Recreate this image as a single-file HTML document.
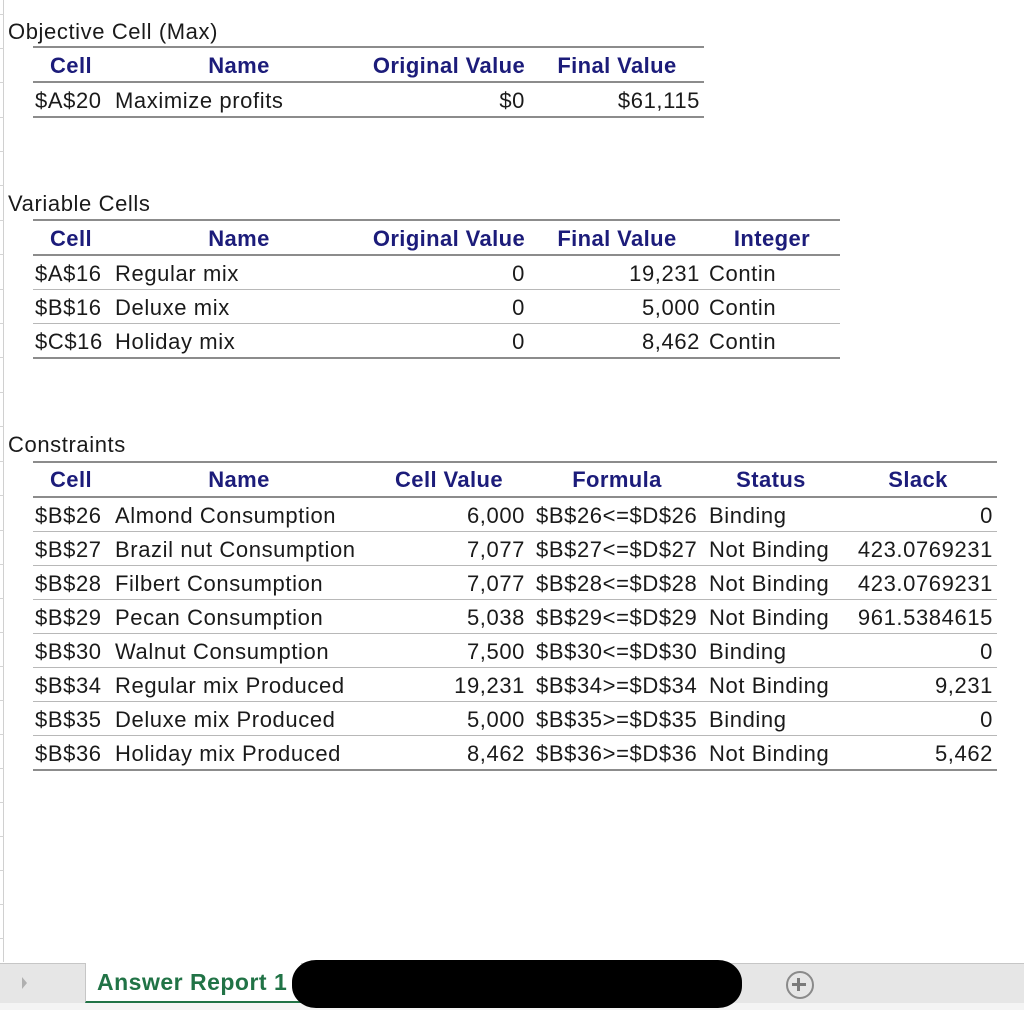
<!DOCTYPE html>
<html><head><meta charset="utf-8"><style>
body{margin:0;width:1024px;height:1010px;position:relative;background:#fff;overflow:hidden;font-family:"Liberation Sans",Arial,sans-serif;font-size:22px;letter-spacing:0.6px;color:#1a1a1a}
.t{position:absolute;line-height:26px;white-space:nowrap}
.r{text-align:right}
.h{color:#1c1c7a;font-weight:bold;transform:translateX(-50%);letter-spacing:0.4px}
.l{position:absolute;height:2px;background:#8c8c8c;left:33px}
.g{position:absolute;left:0;width:4px;height:1px;background:#d4d4d4}
</style></head><body>
<div style="position:absolute;left:3px;top:0;width:1px;height:962px;background:#d0d0d0"></div>
<div class="g" style="top:14px"></div><div class="g" style="top:48px"></div><div class="g" style="top:82px"></div><div class="g" style="top:117px"></div><div class="g" style="top:151px"></div><div class="g" style="top:185px"></div><div class="g" style="top:220px"></div><div class="g" style="top:254px"></div><div class="g" style="top:289px"></div><div class="g" style="top:323px"></div><div class="g" style="top:357px"></div><div class="g" style="top:392px"></div><div class="g" style="top:426px"></div><div class="g" style="top:461px"></div><div class="g" style="top:495px"></div><div class="g" style="top:530px"></div><div class="g" style="top:564px"></div><div class="g" style="top:598px"></div><div class="g" style="top:632px"></div><div class="g" style="top:666px"></div><div class="g" style="top:700px"></div><div class="g" style="top:734px"></div><div class="g" style="top:768px"></div><div class="g" style="top:802px"></div><div class="g" style="top:836px"></div><div class="g" style="top:870px"></div><div class="g" style="top:904px"></div><div class="g" style="top:938px"></div>

<!-- Objective -->
<div class="t" style="left:8px;top:19px">Objective Cell (Max)</div>
<div class="l" style="top:46px;width:671px"></div>
<div class="t h" style="left:71px;top:53px">Cell</div>
<div class="t h" style="left:239px;top:53px">Name</div>
<div class="t h" style="left:449px;top:53px">Original Value</div>
<div class="t h" style="left:617px;top:53px">Final Value</div>
<div class="l" style="top:81px;width:671px"></div>
<div class="t" style="left:35px;top:88px">$A$20</div><div class="t" style="left:115px;top:88px">Maximize profits</div>
<div class="t r" style="right:499px;top:88px">$0</div><div class="t r" style="right:324px;top:88px">$61,115</div>
<div class="l" style="top:116px;width:671px"></div>

<!-- Variable -->
<div class="t" style="left:8px;top:191px">Variable Cells</div>
<div class="l" style="top:219px;width:807px"></div>
<div class="t h" style="left:71px;top:226px">Cell</div>
<div class="t h" style="left:239px;top:226px">Name</div>
<div class="t h" style="left:449px;top:226px">Original Value</div>
<div class="t h" style="left:617px;top:226px">Final Value</div>
<div class="t h" style="left:772px;top:226px">Integer</div>
<div class="l" style="top:254px;width:807px"></div>
<div class="t" style="left:35px;top:261px">$A$16</div><div class="t" style="left:115px;top:261px">Regular mix</div><div class="t r" style="right:499px;top:261px">0</div><div class="t r" style="right:324px;top:261px">19,231</div><div class="t" style="left:709px;top:261px">Contin</div>
<div class="l" style="top:289px;width:807px;background:#b8b8b8;height:1px"></div>
<div class="t" style="left:35px;top:295px">$B$16</div><div class="t" style="left:115px;top:295px">Deluxe mix</div><div class="t r" style="right:499px;top:295px">0</div><div class="t r" style="right:324px;top:295px">5,000</div><div class="t" style="left:709px;top:295px">Contin</div>
<div class="l" style="top:323px;width:807px;background:#b8b8b8;height:1px"></div>
<div class="t" style="left:35px;top:329px">$C$16</div><div class="t" style="left:115px;top:329px">Holiday mix</div><div class="t r" style="right:499px;top:329px">0</div><div class="t r" style="right:324px;top:329px">8,462</div><div class="t" style="left:709px;top:329px">Contin</div>
<div class="l" style="top:357px;width:807px"></div>

<!-- Constraints -->
<div class="t" style="left:8px;top:432px">Constraints</div>
<div class="l" style="top:461px;width:964px"></div>
<div class="t h" style="left:71px;top:467px">Cell</div>
<div class="t h" style="left:239px;top:467px">Name</div>
<div class="t h" style="left:449px;top:467px">Cell Value</div>
<div class="t h" style="left:617px;top:467px">Formula</div>
<div class="t h" style="left:771px;top:467px">Status</div>
<div class="t h" style="left:918px;top:467px">Slack</div>
<div class="l" style="top:496px;width:964px"></div>

<div class="t" style="left:35px;top:503px">$B$26</div><div class="t" style="left:115px;top:503px">Almond Consumption</div><div class="t r" style="right:499px;top:503px">6,000</div><div class="t" style="left:536px;top:503px">$B$26&lt;=$D$26</div><div class="t" style="left:709px;top:503px">Binding</div><div class="t r" style="right:31px;top:503px">0</div>
<div class="l" style="top:531px;width:964px;background:#b8b8b8;height:1px"></div>
<div class="t" style="left:35px;top:537px">$B$27</div><div class="t" style="left:115px;top:537px">Brazil nut Consumption</div><div class="t r" style="right:499px;top:537px">7,077</div><div class="t" style="left:536px;top:537px">$B$27&lt;=$D$27</div><div class="t" style="left:709px;top:537px">Not Binding</div><div class="t r" style="right:31px;top:537px">423.0769231</div>
<div class="l" style="top:565px;width:964px;background:#b8b8b8;height:1px"></div>
<div class="t" style="left:35px;top:571px">$B$28</div><div class="t" style="left:115px;top:571px">Filbert Consumption</div><div class="t r" style="right:499px;top:571px">7,077</div><div class="t" style="left:536px;top:571px">$B$28&lt;=$D$28</div><div class="t" style="left:709px;top:571px">Not Binding</div><div class="t r" style="right:31px;top:571px">423.0769231</div>
<div class="l" style="top:599px;width:964px;background:#b8b8b8;height:1px"></div>
<div class="t" style="left:35px;top:605px">$B$29</div><div class="t" style="left:115px;top:605px">Pecan Consumption</div><div class="t r" style="right:499px;top:605px">5,038</div><div class="t" style="left:536px;top:605px">$B$29&lt;=$D$29</div><div class="t" style="left:709px;top:605px">Not Binding</div><div class="t r" style="right:31px;top:605px">961.5384615</div>
<div class="l" style="top:633px;width:964px;background:#b8b8b8;height:1px"></div>
<div class="t" style="left:35px;top:639px">$B$30</div><div class="t" style="left:115px;top:639px">Walnut Consumption</div><div class="t r" style="right:499px;top:639px">7,500</div><div class="t" style="left:536px;top:639px">$B$30&lt;=$D$30</div><div class="t" style="left:709px;top:639px">Binding</div><div class="t r" style="right:31px;top:639px">0</div>
<div class="l" style="top:667px;width:964px;background:#b8b8b8;height:1px"></div>
<div class="t" style="left:35px;top:673px">$B$34</div><div class="t" style="left:115px;top:673px">Regular mix Produced</div><div class="t r" style="right:499px;top:673px">19,231</div><div class="t" style="left:536px;top:673px">$B$34&gt;=$D$34</div><div class="t" style="left:709px;top:673px">Not Binding</div><div class="t r" style="right:31px;top:673px">9,231</div>
<div class="l" style="top:701px;width:964px;background:#b8b8b8;height:1px"></div>
<div class="t" style="left:35px;top:707px">$B$35</div><div class="t" style="left:115px;top:707px">Deluxe mix Produced</div><div class="t r" style="right:499px;top:707px">5,000</div><div class="t" style="left:536px;top:707px">$B$35&gt;=$D$35</div><div class="t" style="left:709px;top:707px">Binding</div><div class="t r" style="right:31px;top:707px">0</div>
<div class="l" style="top:735px;width:964px;background:#b8b8b8;height:1px"></div>
<div class="t" style="left:35px;top:741px">$B$36</div><div class="t" style="left:115px;top:741px">Holiday mix Produced</div><div class="t r" style="right:499px;top:741px">8,462</div><div class="t" style="left:536px;top:741px">$B$36&gt;=$D$36</div><div class="t" style="left:709px;top:741px">Not Binding</div><div class="t r" style="right:31px;top:741px">5,462</div>
<div class="l" style="top:769px;width:964px"></div>

<!-- Tab bar -->
<div style="position:absolute;left:0;top:963px;width:1024px;height:40px;background:#e6e6e6;border-top:1px solid #c6c6c6"></div>
<div style="position:absolute;left:0;top:1003px;width:1024px;height:7px;background:#f4f4f4"></div>
<div style="position:absolute;left:22px;top:977px;width:0;height:0;border-left:5px solid #b0b0b0;border-top:6px solid transparent;border-bottom:6px solid transparent"></div>
<div style="position:absolute;left:85px;top:963px;width:215px;height:38px;background:#fff;border-left:1px solid #c6c6c6;border-bottom:2px solid #217346"></div>
<div class="t" style="left:97px;top:969px;color:#217346;font-weight:bold;font-size:23px;letter-spacing:0.5px">Answer Report 1</div>
<div style="position:absolute;left:292px;top:960px;width:450px;height:48px;background:#000;border-radius:24px/22px"></div>
<div style="position:absolute;left:786px;top:971px;width:24px;height:24px;border:2px solid #8a8a8a;border-radius:50%"></div>
<div style="position:absolute;left:792px;top:983px;width:14px;height:3px;background:#7a7a7a"></div>
<div style="position:absolute;left:797px;top:978px;width:3px;height:13px;background:#7a7a7a"></div>
</body></html>
